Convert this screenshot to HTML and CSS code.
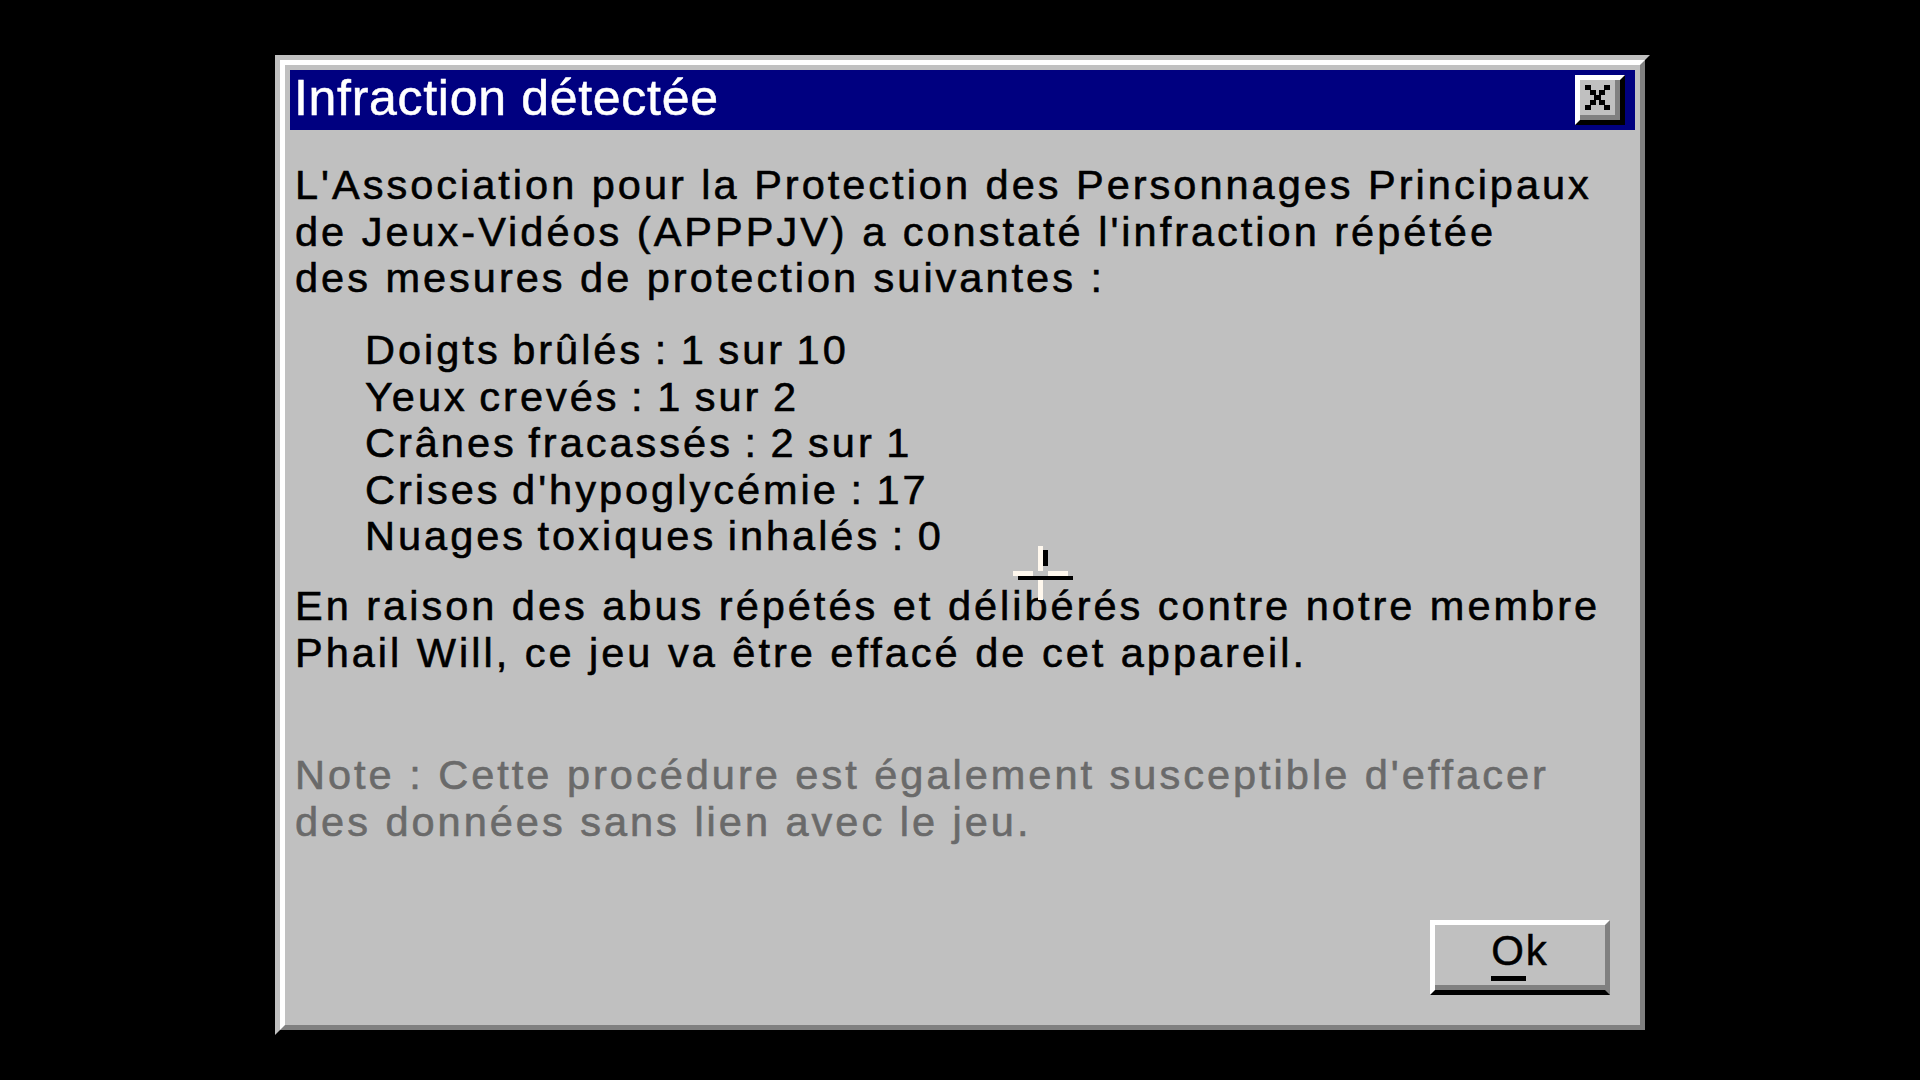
FILE: index.html
```html
<!DOCTYPE html>
<html lang="fr">
<head>
<meta charset="utf-8">
<title>Infraction détectée</title>
<link rel="stylesheet" href="styles.css">
</head>
<body>
<div class="dialog">
  <div class="frame">
    <div class="titlebar">
      <span class="title">Infraction détectée</span>
      <div class="close" aria-label="Fermer">
        <svg width="25" height="25" viewBox="0 0 25 25" shape-rendering="crispEdges">
          <rect x="0" y="0" width="6" height="5" fill="#000"/>
          <rect x="19" y="0" width="6" height="5" fill="#000"/>
          <rect x="5" y="5" width="6" height="5" fill="#000"/>
          <rect x="14" y="5" width="6" height="5" fill="#000"/>
          <rect x="9" y="10" width="7" height="5" fill="#000"/>
          <rect x="5" y="15" width="6" height="5" fill="#000"/>
          <rect x="14" y="15" width="6" height="5" fill="#000"/>
          <rect x="0" y="20" width="6" height="5" fill="#000"/>
          <rect x="19" y="20" width="6" height="5" fill="#000"/>
        </svg>
      </div>
    </div>
    <div class="content">
      <p class="para">L'Association pour la Protection des Personnages Principaux<br>de Jeux-Vidéos (APPPJV) a constaté l'infraction répétée<br>des mesures de protection suivantes :</p>
      <ul class="list">
        <li>Doigts brûlés : 1 sur 10</li>
        <li>Yeux crevés : 1 sur 2</li>
        <li>Crânes fracassés : 2 sur 1</li>
        <li>Crises d'hypoglycémie : 17</li>
        <li>Nuages toxiques inhalés : 0</li>
      </ul>
      <p class="para para-2">En raison des abus répétés et délibérés contre notre membre<br>Phail Will, ce jeu va être effacé de cet appareil.</p>
      <p class="para note">Note : Cette procédure est également susceptible d'effacer<br>des données sans lien avec le jeu.</p>
      <div class="actions">
        <button class="btn" type="button"><span class="accel">O</span>k</button>
      </div>
    </div>
  </div>
</div>
<svg class="cursor" width="70" height="60" viewBox="0 0 70 60" shape-rendering="crispEdges">
  <rect x="30" y="4" width="5" height="16" fill="#000"/>
  <rect x="5" y="30" width="55" height="4" fill="#000"/>
  <rect x="25" y="0" width="5" height="25" fill="#fff8ee"/>
  <rect x="25" y="34" width="5" height="20" fill="#fff8ee"/>
  <rect x="0" y="25" width="20" height="5" fill="#fff8ee"/>
  <rect x="35" y="25" width="20" height="5" fill="#fff8ee"/>
</svg>
</body>
</html>
```

FILE: styles.css
```css
html, body {
  margin: 0;
  padding: 0;
  background: #000;
}

body {
  width: 1920px;
  height: 1080px;
  overflow: hidden;
  padding: 55px 0 0 275px;
  box-sizing: border-box;
  font-family: "Liberation Sans", Arial, sans-serif;
  position: relative;
}

.dialog {
  width: 1375px;
  height: 980px;
  box-sizing: border-box;
  border: 5px solid;
  border-color: #c0c0c0 #000 #000 #c0c0c0;
  background: #c0c0c0;
  display: flex;
}

.frame {
  flex: 1;
  border: 5px solid;
  border-color: #fff #808080 #808080 #fff;
  padding: 5px;
  display: flex;
  flex-direction: column;
  min-height: 0;
}

.titlebar {
  height: 60px;
  background: #000080;
  display: flex;
  align-items: flex-start;
  justify-content: space-between;
  padding: 0 10px 0 4px;
  flex-shrink: 0;
}

.title {
  color: #fff;
  font-size: 50px;
  line-height: 56px;
  letter-spacing: 0.7px;
  white-space: nowrap;
  -webkit-text-stroke: 0.5px #fff;
}

.close {
  margin-top: 5px;
  width: 50px;
  height: 50px;
  box-sizing: border-box;
  border: 5px solid;
  border-color: #fff #000 #000 #fff;
  box-shadow: inset -5px -5px 0 #808080;
  background: #c0c0c0;
  display: flex;
  align-items: flex-start;
  justify-content: flex-start;
  padding: 5px 0 0 5px;
}

.close svg {
  display: block;
}

.content {
  flex: 1;
  display: flex;
  flex-direction: column;
  padding: 32.4px 0 0 5px;
  min-height: 0;
}

.para {
  margin: 0;
  font-size: 41.5px;
  line-height: 46.5px;
  letter-spacing: 3px;
  color: #000;
  white-space: nowrap;
  -webkit-text-stroke: 0.6px currentColor;
}

.list {
  list-style: none;
  margin: 25.5px 0 0 0;
  padding: 0 0 0 70px;
  font-size: 41.5px;
  line-height: 46.5px;
  letter-spacing: 3px;
  word-spacing: -3px;
  color: #000;
  white-space: nowrap;
  -webkit-text-stroke: 0.6px currentColor;
}

.para-2 {
  margin-top: 23.5px;
}

.note {
  margin-top: 76px;
  color: #6a6a6a;
}

.actions {
  margin-top: auto;
  display: flex;
  justify-content: flex-end;
  padding: 0 25px 25px 0;
}

.btn {
  width: 180px;
  height: 75px;
  box-sizing: border-box;
  border-style: solid;
  border-width: 5px;
  border-color: #fff #808080 #000 #fff;
  box-shadow: inset 0 -5px 0 #808080;
  background: #c0c0c0;
  font-family: "Liberation Sans", Arial, sans-serif;
  font-size: 42px;
  line-height: 51px;
  letter-spacing: 2px;
  color: #000;
  padding: 0 0 14px 0;
  margin: 0;
  display: flex;
  align-items: flex-start;
  justify-content: center;
  -webkit-text-stroke: 0.5px #000;
}

.accel {
  border-bottom: 5px solid #000;
}

.cursor {
  position: absolute;
  left: 1013px;
  top: 546px;
}
```
